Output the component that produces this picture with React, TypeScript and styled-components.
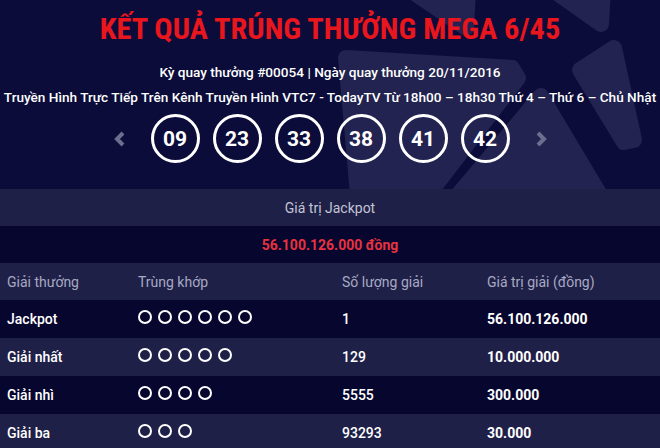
import React from "react";
import styled, { createGlobalStyle } from "styled-components";

const GlobalStyle = createGlobalStyle`
  html, body { margin: 0; padding: 0; background: #0b0c3a; }
  body { font-family: Roboto, "Noto Sans", Arial, sans-serif; }
`;

const Page = styled.div`
  width: 660px;
  height: 448px;
  overflow: hidden;
  background: #0b0c3a;
  color: #fff;
`;

const Hero = styled.section`
  position: relative;
  height: 189px;
  overflow: hidden;
  display: flex;
  flex-direction: column;
  align-items: center;
`;

const Decor = styled.svg`
  position: absolute;
  inset: 0;
  width: 660px;
  height: 189px;
  z-index: 0;
`;

const HeroContent = styled.div`
  position: relative;
  z-index: 1;
  display: flex;
  flex-direction: column;
  align-items: center;
  width: 100%;
`;

const Title = styled.h1`
  margin: 10px 0 0;
  font-family: Roboto, sans-serif;
  font-weight: 700;
  font-size: 30.4px;
  line-height: 38px;
  color: #e9161d;
  white-space: nowrap;
  font-stretch: condensed;
`;

const InfoLine = styled.div<{ $top: number }>`
  margin-top: ${(p) => p.$top}px;
  font-size: 13.6px;
  line-height: 20px;
  font-weight: 500;
  color: #ffffff;
  white-space: nowrap;
`;

const BallRow = styled.div`
  margin-top: 7px;
  display: flex;
  align-items: center;
  gap: 13px;
`;

const Arrow = styled.svg<{ $side: "l" | "r" }>`
  width: 13px;
  height: 18px;
  margin-${(p) => (p.$side === "l" ? "right" : "left")}: 12px;
`;

const Ball = styled.div`
  width: 49px;
  height: 49px;
  box-sizing: border-box;
  border: 3px solid #fff;
  border-radius: 50%;
  display: flex;
  align-items: center;
  justify-content: center;
  font-size: 21px;
  font-weight: 700;
  color: #fff;
`;

const Band = styled.div<{ $dark?: boolean; $color?: string; $weight?: number }>`
  height: 37px;
  display: flex;
  align-items: center;
  justify-content: center;
  background: ${(p) => (p.$dark ? "#06062f" : "#1f2048")};
  color: ${(p) => p.$color || "#c3c4d4"};
  font-size: 14px;
  font-weight: ${(p) => p.$weight || 400};
`;

const Row = styled.div<{ $dark?: boolean; $head?: boolean }>`
  height: ${(p) => (p.$head ? 37 : 38)}px;
  display: grid;
  grid-template-columns: 131px 204px 145px 1fr;
  align-items: center;
  padding-left: 7px;
  background: ${(p) => (p.$dark ? "#06062f" : "#1f2048")};
  font-size: 14px;
  color: ${(p) => (p.$head ? "#a7a9c2" : "#ffffff")};
  font-weight: ${(p) => (p.$head ? 400 : 500)};
`;

const Strong = styled.span`
  font-weight: 700;
`;

const Dots = styled.div`
  display: flex;
  gap: 6px;
  margin-top: -5px;
`;

const Dot = styled.span`
  width: 14px;
  height: 14px;
  box-sizing: border-box;
  border: 2px solid #fff;
  border-radius: 50%;
`;

const balls = ["09", "23", "33", "38", "41", "42"];

const prizes = [
  { name: "Jackpot", match: 6, count: "1", value: "56.100.126.000" },
  { name: "Giải nhất", match: 5, count: "129", value: "10.000.000" },
  { name: "Giải nhì", match: 4, count: "5555", value: "300.000" },
  { name: "Giải ba", match: 3, count: "93293", value: "30.000" },
];

const shapeColor = "#222350";

export default function App() {
  return (
    <Page>
      <GlobalStyle />
      <Hero>
        <Decor viewBox="0 0 660 189">
          <g fill={shapeColor} stroke={shapeColor} strokeWidth={16} strokeLinejoin="round">
            <polygon points="410,-10 468,-10 466,28" />
            <polygon points="553,-10 603,-10 601,24" />
            <polygon points="580,70 614,48 634,140 624,142" />
            <polygon points="346,58 512,68 518,78 428,195 358,195" />
            <polygon points="541,96 458,195 600,195" />
          </g>
        </Decor>
        <HeroContent>
          <Title>KẾT QUẢ TRÚNG THƯỞNG MEGA 6/45</Title>
          <InfoLine $top={14}>Kỳ quay thưởng #00054 | Ngày quay thưởng 20/11/2016</InfoLine>
          <InfoLine $top={5}>
            Truyền Hình Trực Tiếp Trên Kênh Truyền Hình VTC7 - TodayTV Từ 18h00 – 18h30 Thứ 4 – Thứ 6 – Chủ Nhật
          </InfoLine>
          <BallRow>
            <Arrow $side="l" viewBox="0 0 13 18">
              <polyline points="10,3 4,9 10,15" fill="none" stroke="#6c6e8e" strokeWidth={4} />
            </Arrow>
            {balls.map((b) => (
              <Ball key={b}>{b}</Ball>
            ))}
            <Arrow $side="r" viewBox="0 0 13 18">
              <polyline points="3,3 9,9 3,15" fill="none" stroke="#6c6e8e" strokeWidth={4} />
            </Arrow>
          </BallRow>
        </HeroContent>
      </Hero>
      <Band>Giá trị Jackpot</Band>
      <Band $dark $color="#e8323f" $weight={700}>
        56.100.126.000 đồng
      </Band>
      <Row $head>
        <span>Giải thưởng</span>
        <span>Trùng khớp</span>
        <span>Số lượng giải</span>
        <span>Giá trị giải (đồng)</span>
      </Row>
      {prizes.map((p, i) => (
        <Row key={p.name} $dark={i % 2 === 0}>
          <span>{p.name}</span>
          <Dots>
            {Array.from({ length: p.match }).map((_, k) => (
              <Dot key={k} />
            ))}
          </Dots>
          <span>{p.count}</span>
          <Strong>{p.value}</Strong>
        </Row>
      ))}
    </Page>
  );
}
